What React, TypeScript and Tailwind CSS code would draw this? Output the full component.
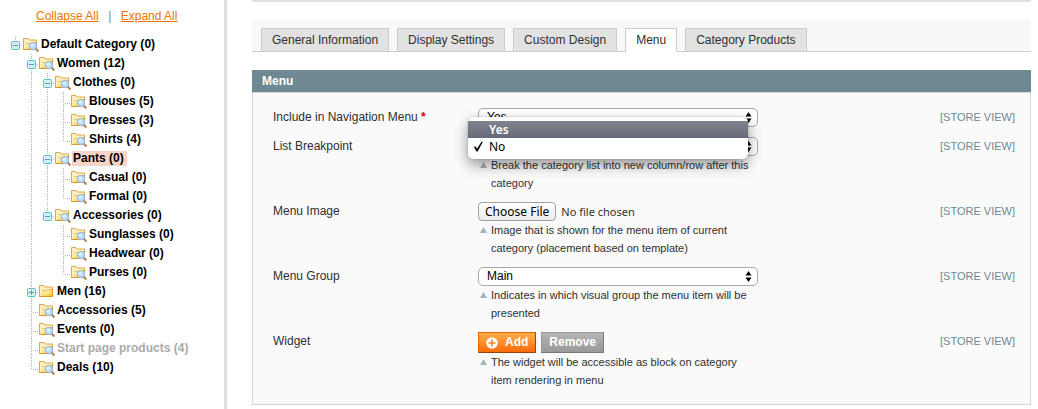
import React from "react";

type Category = {
  name: string;
  count: number;
  expanded?: boolean;
  collapsed?: boolean;
  selected?: boolean;
  inactive?: boolean;
  children?: Category[];
};

const root: Category = {
  name: "Default Category",
  count: 0,
  expanded: true,
  children: [
    {
      name: "Women",
      count: 12,
      expanded: true,
      children: [
        {
          name: "Clothes",
          count: 0,
          expanded: true,
          children: [
            { name: "Blouses", count: 5 },
            { name: "Dresses", count: 3 },
            { name: "Shirts", count: 4 },
          ],
        },
        {
          name: "Pants",
          count: 0,
          expanded: true,
          selected: true,
          children: [
            { name: "Casual", count: 0 },
            { name: "Formal", count: 0 },
          ],
        },
        {
          name: "Accessories",
          count: 0,
          expanded: true,
          children: [
            { name: "Sunglasses", count: 0 },
            { name: "Headwear", count: 0 },
            { name: "Purses", count: 0 },
          ],
        },
      ],
    },
    { name: "Men", count: 16, collapsed: true },
    { name: "Accessories", count: 5 },
    { name: "Events", count: 0 },
    { name: "Start page products", count: 4, inactive: true },
    { name: "Deals", count: 10 },
  ],
};

function FolderIcon({ search }: { search: boolean }) {
  return (
    <svg width="16" height="19" viewBox="0 0 16 19" className="shrink-0" aria-hidden="true">
      <defs>
        <linearGradient id="folderFill" x1="0" y1="0" x2="1" y2="1">
          <stop offset="0" stopColor="#fff6cc" />
          <stop offset="0.5" stopColor="#fbe28a" />
          <stop offset="1" stopColor="#fcc81e" />
        </linearGradient>
      </defs>
      <path d="M0.5 14.5V3.5H5L6 5H13.5V14.5Z" fill="#fdf0bf" stroke="#dfa850" />
      <path d="M1.5 14L3.5 8.5H7L8 7.5H13V14Z" fill="url(#folderFill)" />
      <path d="M3 8.5H7L8 7.5H13" fill="none" stroke="#ecc262" />
      <path d="M0.5 14.5H13.5V6" fill="none" stroke="#d8982c" />
      {search && (
        <>
          <path d="M12.2 13.2L15.5 16.5" stroke="#c0814e" strokeWidth="2" />
          <circle cx="10" cy="11" r="3.7" fill="#bcdcfb" stroke="#94b8e6" />
          <circle cx="9.3" cy="10.2" r="1.6" fill="#dff0ff" />
        </>
      )}
    </svg>
  );
}

function Guide({ kind }: { kind: "none" | "line" | "tee" | "elbow" }) {
  return (
    <svg width="16" height="19" viewBox="0 0 16 19" className="shrink-0" aria-hidden="true">
      {kind !== "none" && (
        <path
          d={kind === "elbow" ? "M8.5 0V12" : "M8.5 0V19"}
          stroke="#b5b5b5"
          strokeDasharray="1 1"
        />
      )}
      {(kind === "tee" || kind === "elbow") && (
        <path d="M10 11.5H16" stroke="#b5b5b5" strokeDasharray="1 1" />
      )}
    </svg>
  );
}

function Toggle({ open, first, last, name }: { open: boolean; first: boolean; last: boolean; name: string }) {
  return (
    <button type="button" className="h-[19px] w-4 shrink-0" aria-label={`${open ? "Collapse" : "Expand"} ${name}`}>
      <svg width="16" height="19" viewBox="0 0 16 19" aria-hidden="true">
        <path d={last ? "M8.5 2V6" : "M8.5 0V19"} stroke="#b5b5b5" strokeDasharray="1 1" />
        {!first && <path d="M14 10.5H16" stroke="#b5b5b5" strokeDasharray="1 1" />}
        <rect x="4.5" y="6.5" width="8" height="8" rx="1" fill="#d3f0f5" stroke="#5cbccd" />
        <path d={open ? "M6 10.5H11" : "M6 10.5H11M8.5 8V13"} stroke="#3fa9bd" />
      </svg>
    </button>
  );
}

function TreeNode({ node, guides, last }: { node: Category; guides: boolean[]; last: boolean }) {
  const isRoot = node === root;
  const childGuides = isRoot ? [false] : [...guides, !last];
  return (
    <li>
      <div className="flex h-[19px]">
        {guides.map((on, i) => (
          <Guide key={i} kind={on ? "line" : "none"} />
        ))}
        {node.expanded || node.collapsed ? (
          <Toggle open={!!node.expanded} first={isRoot} last={last} name={node.name} />
        ) : (
          <Guide kind={last ? "elbow" : "tee"} />
        )}
        <FolderIcon search={!node.collapsed} />
        <a
          href="#"
          className={
            "my-0.5 ml-px whitespace-nowrap pl-px pr-[3px] text-xs leading-[15px] font-bold " +
            (node.selected ? "bg-[#f8d5c8] " : "") +
            (node.inactive ? "text-[#aaaaaa]" : "text-black")
          }
        >
          {node.name} ({node.count})
        </a>
      </div>
      {node.children && (
        <ul>
          {node.children.map((child, i) => (
            <TreeNode
              key={child.name}
              node={child}
              guides={childGuides}
              last={i === node.children!.length - 1}
            />
          ))}
        </ul>
      )}
    </li>
  );
}

function Select({ id, value, options }: { id: string; value: string; options: string[] }) {
  return (
    <div className="relative">
      <select
        id={id}
        defaultValue={value}
        className="block h-[19px] w-full appearance-none rounded-[5px] border border-[#a9a9a9] bg-white pl-2 pr-5 text-xs leading-[17px] text-black"
      >
        {options.map((o) => (
          <option key={o}>{o}</option>
        ))}
      </select>
      <svg width="7" height="11" viewBox="0 0 7 11" className="pointer-events-none absolute right-1.5 top-1" aria-hidden="true">
        <path d="M3.5 0L6.5 4.5H0.5ZM3.5 11L6.5 6.5H0.5Z" fill="#000" />
      </svg>
    </div>
  );
}

function Field({
  label,
  htmlFor,
  required,
  hint,
  children,
}: {
  label: string;
  htmlFor: string;
  required?: boolean;
  hint?: string;
  children: React.ReactNode;
}) {
  return (
    <div className="flex items-start">
      <label htmlFor={htmlFor} className="w-[205px] shrink-0 text-xs leading-[19px] text-[#2f2f2f]">
        {label}
        {required && <span className="font-bold text-[#d40707]"> *</span>}
      </label>
      <div className="w-[280px] shrink-0">
        {children}
        {hint && (
          <p className="flex gap-1 pl-0.5 text-[11px] leading-[18px] text-[#2f2f2f]">
            <svg width="7" height="18" viewBox="0 0 7 18" className="shrink-0" aria-hidden="true">
              <path d="M3.5 6L7 12H0Z" fill="#a3b5ba" />
            </svg>
            <span>{hint}</span>
          </p>
        )}
      </div>
      <span className="ml-auto whitespace-nowrap text-[11px] leading-[19px] text-[#6f8992]">[STORE VIEW]</span>
    </div>
  );
}

const tabs = ["General Information", "Display Settings", "Custom Design", "Menu", "Category Products"];

export default function App() {
  return (
    <div className="flex min-h-screen bg-white font-['Liberation_Sans',Arial,sans-serif]">
      <aside className="w-[227px] shrink-0 border-r-[3px] border-[#dfdfdf]">
        <div className="flex pl-9 pt-2 text-xs leading-4 text-[#ea7601]">
          <a href="#" className="underline">Collapse All</a>
          <span className="w-[22px] text-center text-[#6f8992]">|</span>
          <a href="#" className="underline">Expand All</a>
        </div>
        <ul className="pl-[7px] pt-[11px]">
          <TreeNode node={root} guides={[]} last={true} />
        </ul>
      </aside>

      <main className="min-w-0 flex-1 pl-[25px] pr-[7px]">
        <div className="h-0.5 bg-[#dfdfdf]" />
        <div className="mt-[18px] flex gap-2 border-b border-[#cccccc] bg-[#f8f8f8] pl-[9px] pt-2" role="tablist">
          {tabs.map((t) => (
            <button
              key={t}
              type="button"
              role="tab"
              aria-selected={t === "Menu"}
              className={
                "whitespace-nowrap border border-b-0 border-[#cccccc] px-2.5 text-xs leading-[22px] text-[#2f2f2f] " +
                (t === "Menu" ? "-mb-px bg-white pb-px" : "bg-[#e2e2e2]")
              }
            >
              {t}
            </button>
          ))}
        </div>

        <h2 className="mt-[18px] bg-[#6f8992] pl-2.5 text-xs leading-[22px] font-bold text-white">Menu</h2>
        <form className="flex flex-col gap-2.5 border border-[#d6d6d6] bg-[#fafafa] py-[15px] pl-5 pr-[15px]">
          <Field label="Include in Navigation Menu" htmlFor="include" required>
            <Select id="include" value="Yes" options={["Yes", "No"]} />
          </Field>

          <Field
            label="List Breakpoint"
            htmlFor="breakpoint"
            hint="Break the category list into new column/row after this category"
          >
            <div className="relative">
              <Select id="breakpoint" value="No" options={["Yes", "No"]} />
              <ul
                role="listbox"
                aria-label="List Breakpoint"
                className="absolute -left-2.5 -top-5 z-10 w-full rounded-[5px] bg-white py-1 font-['Noto_Sans',sans-serif] text-xs leading-[17px] text-black shadow-[0_6px_14px_rgba(0,0,0,0.4),0_0_2px_rgba(0,0,0,0.25)]"
              >
                <li role="option" aria-selected={false} className="bg-linear-to-b from-[#80848f] to-[#646a77] pl-[21px] font-semibold text-white">
                  Yes
                </li>
                <li role="option" aria-selected={true} className="flex items-center pl-1.5">
                  <svg width="9" height="11" viewBox="0 0 9 11" className="mr-1.5" aria-hidden="true">
                    <path d="M0 6L1.6 5.2L3 7.8L7.6 0.5L8.8 0.9L3.6 10.5H2.4Z" fill="#000" />
                  </svg>
                  No
                </li>
              </ul>
            </div>
          </Field>

          <Field
            label="Menu Image"
            htmlFor="image"
            hint="Image that is shown for the menu item of current category (placement based on template)"
          >
            <input
              id="image"
              type="file"
              className="block h-[19px] w-full font-['Noto_Sans',sans-serif] text-[11px] leading-[19px] text-[#2f2f2f] file:mr-[5px] file:h-[19px] file:rounded-[4px] file:border file:border-solid file:border-[#a0a0a0] file:bg-linear-to-b file:from-white file:to-[#ececec] file:px-1.5 file:text-xs file:leading-[17px] file:text-black"
            />
          </Field>

          <Field
            label="Menu Group"
            htmlFor="group"
            hint="Indicates in which visual group the menu item will be presented"
          >
            <Select id="group" value="Main" options={["Main"]} />
          </Field>

          <Field
            label="Widget"
            htmlFor="widget"
            hint="The widget will be accessible as block on category item rendering in menu"
          >
            <div className="flex gap-[5px] text-xs leading-[19px] font-bold text-white">
              <button
                id="widget"
                type="button"
                className="flex items-center gap-[7px] border border-[#ed6502] border-r-[#a04300] border-b-[#a04300] bg-linear-to-b from-[#ffac47] to-[#f86b05] px-[7px]"
              >
                <svg width="12" height="12" viewBox="0 0 12 12" aria-hidden="true">
                  <circle cx="6" cy="6" r="5.8" fill="#fff" />
                  <path d="M6 2.5V9.5M2.5 6H9.5" stroke="#f58220" strokeWidth="1.6" />
                </svg>
                Add
              </button>
              <button
                type="button"
                className="border border-[#999999] border-r-[#777777] border-b-[#777777] bg-linear-to-b from-[#b5b5b5] to-[#999999] px-[7px]"
              >
                Remove
              </button>
            </div>
          </Field>
        </form>
      </main>
    </div>
  );
}
